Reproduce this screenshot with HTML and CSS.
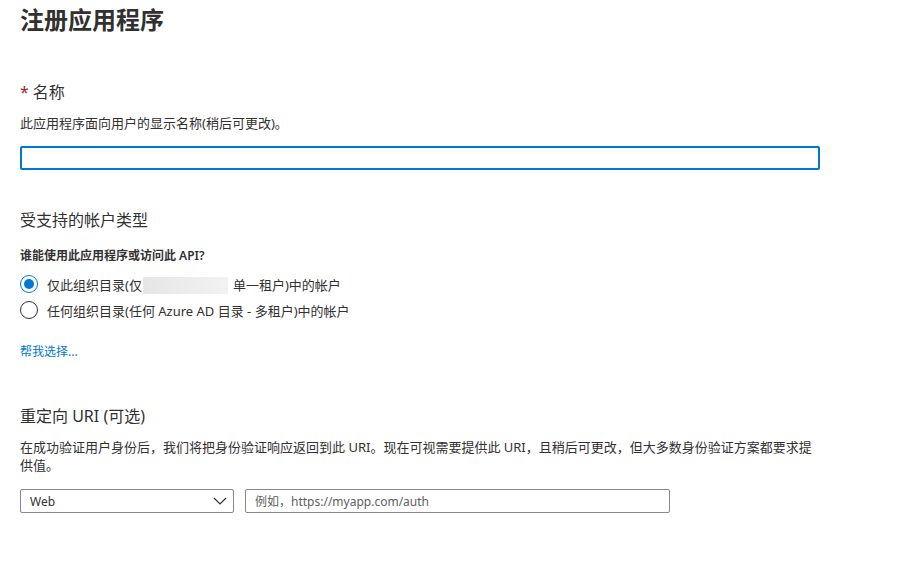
FILE: index.html
```html
<!DOCTYPE html>
<html lang="zh-CN">
<head>
    <meta charset="UTF-8">
    <title>注册应用程序</title>
    <link rel="stylesheet" href="styles.css">
</head>
<body>
    <div class="page">
        <h1 class="title">注册应用程序</h1>

        <section class="section">
            <div class="label"><span class="required">*</span>名称</div>
            <p class="desc">此应用程序面向用户的显示名称(稍后可更改)。</p>
            <input class="text-input focused" type="text">
        </section>

        <section class="section accounts">
            <h2 class="heading">受支持的帐户类型</h2>
            <p class="question">谁能使用此应用程序或访问此 API?</p>
            <div class="radios">
                <label class="radio-row">
                    <span class="radio checked"></span>
                    <span>仅此组织目录(仅<span class="redacted"></span>单一租户)中的帐户</span>
                </label>
                <label class="radio-row">
                    <span class="radio"></span>
                    <span>任何组织目录(任何 Azure AD 目录 - 多租户)中的帐户</span>
                </label>
            </div>
            <a class="link" href="#">帮我选择...</a>
        </section>

        <section class="section redirect">
            <h2 class="heading">重定向 URI (可选)</h2>
            <p class="desc long">在成功验证用户身份后，我们将把身份验证响应返回到此 URI。现在可视需要提供此 URI，且稍后可更改，但大多数身份验证方案都要求提供值。</p>
            <div class="uri-row">
                <div class="select">
                    <span>Web</span>
                    <svg class="chevron" width="14" height="8" viewBox="0 0 14 8">
                        <polyline points="1,1 7,7 13,1" fill="none" stroke="#323130" stroke-width="1.2"/>
                    </svg>
                </div>
                <div class="uri-input">例如，https://myapp.com/auth</div>
            </div>
        </section>
    </div>
</body>
</html>
```

FILE: styles.css
```css
* {
    margin: 0;
    padding: 0;
    box-sizing: border-box;
}

body {
    background: #fff;
    color: #323130;
    font-family: 'Noto Sans', 'Noto Sans CJK SC', sans-serif;
    font-size: 12px;
}

.page {
    padding: 4px 20px 0 20px;
}

.title {
    font-size: 24px;
    line-height: 32px;
    font-weight: 700;
}

.section {
    width: 800px;
    margin-top: 45px;
}

.label {
    font-size: 16px;
    line-height: 22px;
}

.required {
    color: #a4262c;
    margin-right: 4px;
}

.desc {
    margin-top: 11px;
    line-height: 18px;
    font-size: 13px;
}

.text-input {
    display: block;
    margin-top: 14px;
    width: 800px;
    height: 24px;
    border: 1px solid #8a8886;
    border-radius: 2px;
    outline: none;
}

.text-input.focused {
    border: 2px solid #0078d4;
}

.accounts {
    margin-top: 39px;
}

.heading {
    font-size: 16px;
    line-height: 22px;
    font-weight: 400;
}

.question {
    margin-top: 16px;
    line-height: 18px;
    font-weight: 600;
}

.radios {
    margin-top: 6px;
}

.radio-row {
    display: flex;
    align-items: center;
    gap: 9px;
    height: 26px;
    font-size: 13px;
}

.radio {
    width: 18px;
    height: 18px;
    border: 1px solid #323130;
    border-radius: 50%;
    flex-shrink: 0;
    display: flex;
    align-items: center;
    justify-content: center;
}

.radio.checked {
    border-color: #0078d4;
}

.radio.checked::after {
    content: '';
    width: 10px;
    height: 10px;
    border-radius: 50%;
    background: #0078d4;
}

.redacted {
    display: inline-block;
    width: 85px;
    height: 17px;
    margin: 0 5px 0 1px;
    vertical-align: -4px;
    background: linear-gradient(90deg, #e6e6e6, #f2f2f2);
}

.link {
    display: inline-block;
    margin-top: 20px;
    line-height: 18px;
    color: #0078d4;
    text-decoration: none;
}

.redirect {
    margin-top: 44px;
}

.desc.long {
    width: 800px;
}

.uri-row {
    display: flex;
    gap: 11px;
    margin-top: 15px;
}

.select {
    width: 214px;
    height: 24px;
    border: 1px solid #8a8886;
    border-radius: 2px;
    display: flex;
    align-items: center;
    justify-content: space-between;
    padding: 0 6px 0 9px;
}

.uri-input {
    width: 425px;
    height: 24px;
    border: 1px solid #8a8886;
    border-radius: 2px;
    display: flex;
    align-items: center;
    padding: 0 9px;
    color: #605e5c;
}
```
